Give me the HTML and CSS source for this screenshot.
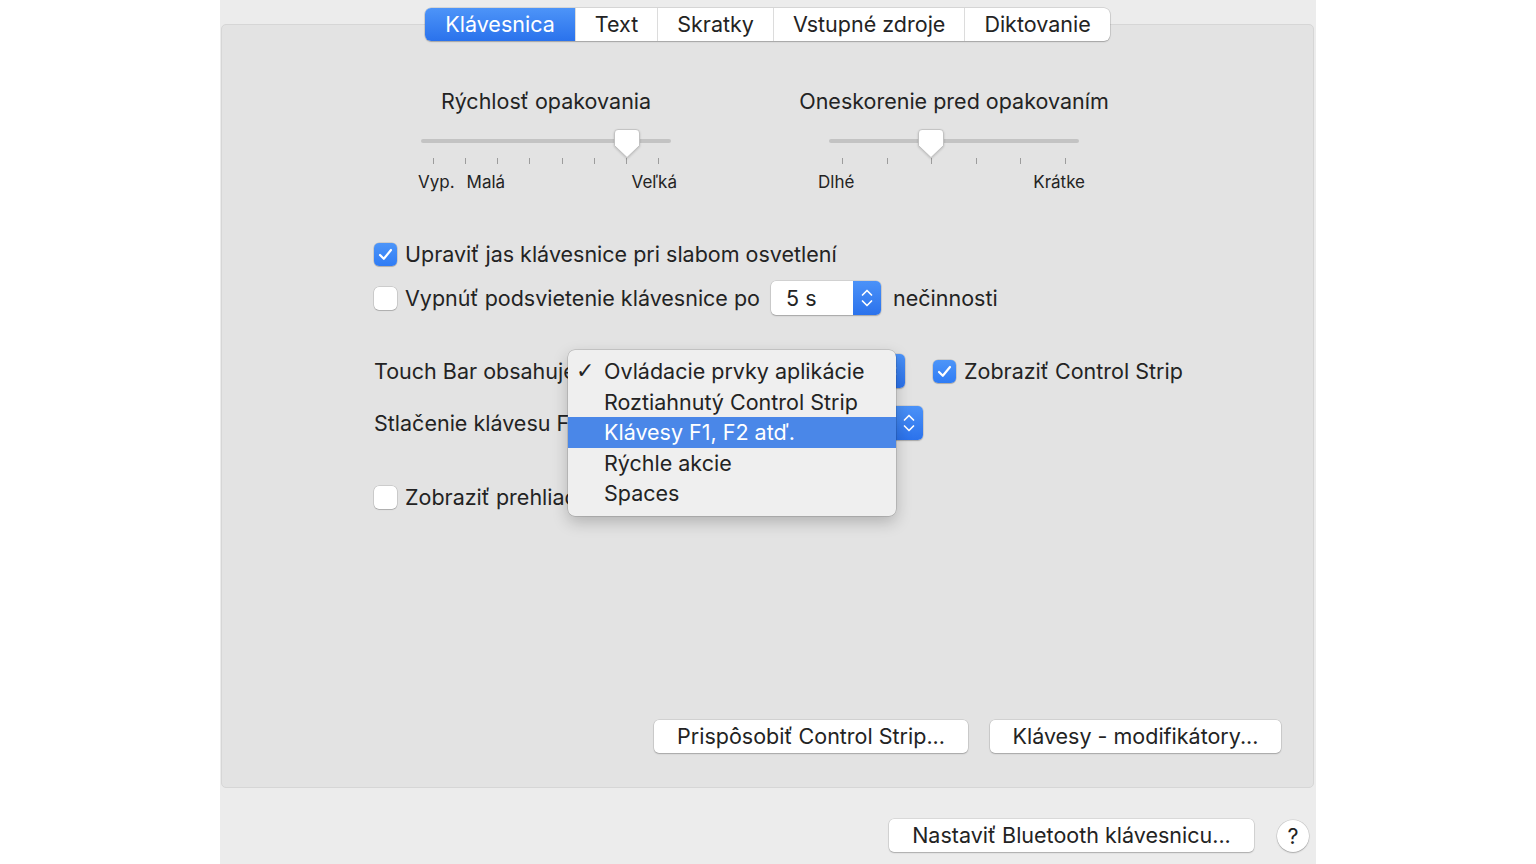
FILE: index.html
```html
<!DOCTYPE html>
<html lang="sk">
<head>
    <meta charset="UTF-8">
    <title>Klávesnica</title>
    <link rel="stylesheet" href="styles.css">
</head>
<body>
    <div class="window">
        <div class="pane">
            <div class="tabs">
                <a href="#" class="tab on">Klávesnica</a>
                <a href="#" class="tab">Text</a>
                <a href="#" class="tab">Skratky</a>
                <a href="#" class="tab">Vstupné zdroje</a>
                <a href="#" class="tab">Diktovanie</a>
            </div>

            <div class="sliders">
                <div class="slider slider-rate">
                    <div class="slider-title">Rýchlosť opakovania</div>
                    <div class="track">
                        <svg class="thumb" width="28" height="31" viewBox="0 0 28 31"><path d="M5 1.5H23Q26.5 1.5 26.5 5V17.5L14 29.5L1.5 17.5V5Q1.5 1.5 5 1.5Z" fill="#fff" stroke="#b9b9b9" stroke-width="0.8"/></svg>
                    </div>
                    <div class="ticks"><i></i><i></i><i></i><i></i><i></i><i></i><i></i><i></i></div>
                    <div class="slider-labels">
                        <span class="lb-off">Vyp.</span>
                        <span class="lb-low">Malá</span>
                        <span class="lb-end">Veľká</span>
                    </div>
                </div>
                <div class="slider slider-delay">
                    <div class="slider-title">Oneskorenie pred opakovaním</div>
                    <div class="track">
                        <svg class="thumb" width="28" height="31" viewBox="0 0 28 31"><path d="M5 1.5H23Q26.5 1.5 26.5 5V17.5L14 29.5L1.5 17.5V5Q1.5 1.5 5 1.5Z" fill="#fff" stroke="#b9b9b9" stroke-width="0.8"/></svg>
                    </div>
                    <div class="ticks"><i></i><i></i><i></i><i></i><i></i><i></i></div>
                    <div class="slider-labels">
                        <span class="lb-long">Dlhé</span>
                        <span class="lb-end">Krátke</span>
                    </div>
                </div>
            </div>

            <div class="options">
                <div class="row row-bright">
                    <span class="check on"><svg width="15" height="13" viewBox="0 0 15 13"><path d="M2 7L5.8 10.8L13 2" fill="none" stroke="#fff" stroke-width="2.2" stroke-linecap="round" stroke-linejoin="round"/></svg></span>
                    <span class="text">Upraviť jas klávesnice pri slabom osvetlení</span>
                </div>
                <div class="row row-light">
                    <span class="check"></span>
                    <span class="text">Vypnúť podsvietenie klávesnice po</span>
                    <span class="popup popup-time">
                        <span class="popup-value">5 s</span>
                        <span class="popup-arrows"><svg width="14" height="22" viewBox="0 0 14 22"><path d="M2.5 8L7 3.5L11.5 8M2.5 14L7 18.5L11.5 14" fill="none" stroke="#fff" stroke-width="1.7" stroke-linecap="round" stroke-linejoin="round"/></svg></span>
                    </span>
                    <span class="text after">nečinnosti</span>
                </div>

                <div class="row row-touchbar">
                    <span class="label tb-label">Touch Bar obsahuje:</span>
                    <span class="popup popup-tb">
                        <span class="popup-value"></span>
                        <span class="popup-arrows"><svg width="14" height="22" viewBox="0 0 14 22"><path d="M2.5 8L7 3.5L11.5 8M2.5 14L7 18.5L11.5 14" fill="none" stroke="#fff" stroke-width="1.7" stroke-linecap="round" stroke-linejoin="round"/></svg></span>
                    </span>
                    <span class="check on strip-check"><svg width="15" height="13" viewBox="0 0 15 13"><path d="M2 7L5.8 10.8L13 2" fill="none" stroke="#fff" stroke-width="2.2" stroke-linecap="round" stroke-linejoin="round"/></svg></span>
                    <span class="text">Zobraziť Control Strip</span>

                    <!-- open menu -->
                    <div class="menu">
                        <div class="menu-item checked"><span class="mark">✓</span>Ovládacie prvky aplikácie</div>
                        <div class="menu-item">Roztiahnutý Control Strip</div>
                        <div class="menu-item sel">Klávesy F1, F2 atď.</div>
                        <div class="menu-item">Rýchle akcie</div>
                        <div class="menu-item">Spaces</div>
                    </div>
                </div>
                <div class="row row-fn">
                    <span class="label fn-label">Stlačenie klávesu Fn:</span>
                    <span class="popup popup-fn">
                        <span class="popup-value"></span>
                        <span class="popup-arrows"><svg width="14" height="22" viewBox="0 0 14 22"><path d="M2.5 8L7 3.5L11.5 8M2.5 14L7 18.5L11.5 14" fill="none" stroke="#fff" stroke-width="1.7" stroke-linecap="round" stroke-linejoin="round"/></svg></span>
                    </span>
                </div>

                <div class="row row-viewer">
                    <span class="check"></span>
                    <span class="text">Zobraziť prehliadač klávesnice a emoji</span>
                </div>
            </div>

            <div class="pane-buttons">
                <a href="#" class="btn btn-strip">Prispôsobiť Control Strip...</a>
                <a href="#" class="btn btn-mod">Klávesy - modifikátory...</a>
            </div>
        </div>

        <div class="footer">
            <a href="#" class="btn btn-bt">Nastaviť Bluetooth klávesnicu...</a>
            <a href="#" class="help">?</a>
        </div>
    </div>
</body>
</html>
```

FILE: styles.css
```css
body, div, span, a{
    font-family: Inter, "Noto Sans", sans-serif;
    margin: 0; padding: 0;
}
body{
    background: #fff;
    color: #232323;
    font-size: 21.5px;
}
a{ color: inherit; text-decoration: none; }

.window{
    margin-left: 220px;
    width: 1096px;
    height: 864px;
    background: #ececec;
    overflow: hidden;
}

/* tab box */
.pane{
    margin: 24px 2px 0 1px;
    height: 764px;
    background: #e3e3e3;
    border: 1px solid #d6d6d6;
    border-radius: 5px;
    box-sizing: border-box;
    display: flex;
    flex-direction: column;
}

.tabs{
    align-self: center;
    display: flex;
    margin-top: -17px;
    height: 33px;
    background: #fff;
    border-radius: 6px;
    box-shadow: 0 0 0 0.5px rgba(0,0,0,.18), 0 1px 1.5px rgba(0,0,0,.22);
}
.tab{
    display: block;
    height: 33px;
    line-height: 33px;
    padding: 0 19px;
    border-left: 1px solid #dcdcdc;
}
.tab:first-child{ border-left: 0; padding: 0 20px; }
.tabs .on{
    color: #fff;
    background: linear-gradient(#4d94f8, #2a72ec);
    border-radius: 6px 0 0 6px;
}

/* sliders */
.sliders{
    display: flex;
    gap: 98px;
    padding-left: 169px;
    margin-top: 46px;
}
.slider{ width: 310px; }
.slider-title{
    text-align: center;
    line-height: 26px;
    margin-top: 1px;
}
.track{
    position: relative;
    margin: 25px 30px 0;
    height: 4px;
    border-radius: 2px;
    background: #c3c3c3;
}
.thumb{
    position: absolute;
    top: -11px;
    filter: drop-shadow(0 1px 1px rgba(0,0,0,.18));
}
.slider-rate .thumb{ left: 192px; }
.slider-delay .thumb{ left: 88px; }

.ticks{
    display: flex;
    justify-content: space-between;
    margin: 15px 30px 0;
    padding: 0 12px;
    height: 6px;
}
.slider-delay .ticks{ padding: 0 13px; }
.ticks i{
    display: block;
    width: 1px;
    height: 6px;
    background: #9c9c9c;
}

.slider-labels{
    display: flex;
    margin-top: 7px;
    font-size: 17px;
    line-height: 22px;
    padding-right: 24px;
}
.lb-off{ margin-left: 27px; }
.lb-low{ margin-left: 12px; }
.lb-long{ margin-left: 19px; }
.lb-end{ margin-left: auto; }

/* options */
.options{
    padding-left: 152px;
    margin-top: 44px;
}
.row{
    position: relative;
    display: flex;
    align-items: center;
    height: 34px;
}
.row-light{ margin-top: 10px; }
.row-touchbar{ margin-top: 39px; }
.row-fn{ margin-top: 18px; }
.row-viewer{ margin-top: 40px; }

.check{
    display: flex;
    align-items: center;
    justify-content: center;
    width: 23px;
    height: 23px;
    flex: none;
    box-sizing: border-box;
    border-radius: 5px;
    background: #fff;
    box-shadow: 0 0 0 0.5px rgba(0,0,0,.2), 0 1px 1px rgba(0,0,0,.15);
    margin-right: 8px;
}
.check.on{
    background: linear-gradient(#4d95f8, #2f7cf5);
}

.after{ margin-left: 12px; }

.label{
    display: block;
    white-space: nowrap;
}
.tb-label{ width: 194px; margin-right: 12px; }
.fn-label{ width: 194px; margin-right: 22px; }

.popup{
    display: flex;
    height: 34px;
    border-radius: 5px;
    background: #fff;
    box-shadow: 0 0 0 0.5px rgba(0,0,0,.15), 0 1px 1.5px rgba(0,0,0,.22);
}
.popup-value{
    flex: 1;
    line-height: 34px;
    padding-left: 15px;
}
.popup-arrows{
    display: flex;
    align-items: center;
    justify-content: center;
    width: 28px;
    border-radius: 0 5px 5px 0;
    background: linear-gradient(#4b92f8, #2b72ec);
}
.popup-time{ width: 110px; margin-left: 11px; }
.popup-tb{ width: 325px; margin-right: 28px; }
.popup-fn{ width: 333px; }

/* open popup menu */
.menu{
    position: absolute;
    left: 194px;
    top: -4px;
    width: 328px;
    padding: 6px 0 7px;
    background: #efefef;
    border-radius: 7px;
    box-shadow: 0 0 0 0.5px rgba(0,0,0,.22), 0 6px 16px rgba(0,0,0,.22);
    z-index: 5;
}
.menu-item{
    position: relative;
    height: 30.6px;
    line-height: 30.6px;
    padding-left: 36px;
    white-space: nowrap;
}
.menu-item .mark{
    position: absolute;
    left: 8px;
    font-family: "DejaVu Sans", sans-serif;
    font-size: 22px;
    font-weight: 300;
}
.menu-item.sel{
    color: #fff;
    background: #4a87e8;
}

/* buttons */
.pane-buttons{
    display: flex;
    justify-content: flex-end;
    gap: 22px;
    margin-top: auto;
    margin-bottom: 34px;
    padding-right: 32px;
}
.btn{
    display: block;
    height: 33px;
    line-height: 33px;
    text-align: center;
    background: #fff;
    border-radius: 5px;
    box-shadow: 0 0 0 0.5px rgba(0,0,0,.15), 0 1px 1.5px rgba(0,0,0,.22);
}
.btn-strip{ width: 314px; }
.btn-mod{ width: 291px; }
.btn-bt{ width: 365px; }

.footer{
    display: flex;
    justify-content: flex-end;
    align-items: center;
    gap: 23px;
    margin-top: 31px;
    padding-right: 7px;
}
.help{
    display: block;
    width: 32px;
    height: 32px;
    line-height: 32px;
    text-align: center;
    border-radius: 50%;
    background: #fff;
    box-shadow: 0 0 0 0.5px rgba(0,0,0,.15), 0 1px 1.5px rgba(0,0,0,.22);
}
```
